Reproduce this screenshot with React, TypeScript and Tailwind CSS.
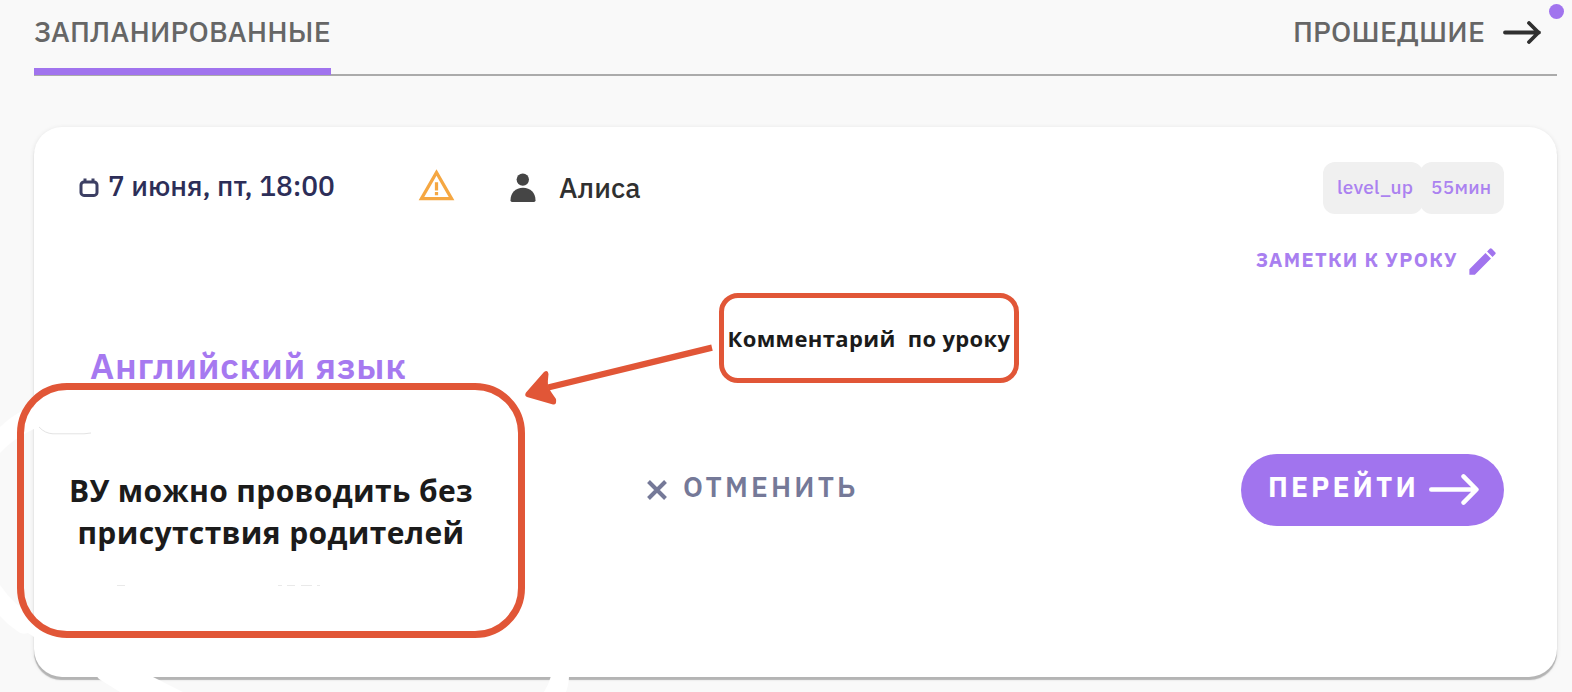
import type { ReactNode } from "react";
import { MdEdit, MdWarningAmber } from "react-icons/md";

const PLEX = "font-['IBM_Plex_Sans','Noto_Sans',sans-serif]";
const NOTE = "font-['Open_Sans',sans-serif] font-bold text-[#1b1b1b]";

function ArrowRight({ className }: { className: string }) {
  return (
    <svg viewBox="0 0 38 23" className={className} fill="none" stroke="currentColor" strokeWidth="3.8" strokeLinecap="round" strokeLinejoin="round">
      <path d="M2 11.5H36M26 2l9.500 9.500L26 21" />
    </svg>
  );
}

function LongArrow({ className }: { className: string }) {
  return (
    <svg viewBox="0 0 50 31" className={className} fill="none" stroke="currentColor" strokeWidth="4.4" strokeLinecap="round" strokeLinejoin="round">
      <path d="M2.200 15.500H47M34.500 2.400L47.500 15.500L34.500 28.600" />
    </svg>
  );
}

function CalendarIcon() {
  return (
    <svg viewBox="0 0 20 19" className="-mt-px h-[19px] w-5" fill="none" stroke="#3c3f63" strokeWidth="3">
      <rect x="2" y="4" width="16" height="13.4" rx="3" />
      <path d="M6 .5V4M14 .5V4" />
    </svg>
  );
}

function PersonIcon() {
  return (
    <svg viewBox="0 0 26 30" className="ml-[54px] h-[30px] w-[26px]" fill="#454545">
      <circle cx="12.8" cy="6.6" r="6.2" />
      <path d="M.5 27.2C.5 20 5.500 14.800 13 14.800S25.500 20 25.500 27.200Q25.500 29 24 29H2Q.5 29 .5 27.200Z" />
    </svg>
  );
}

function Tag({ className, children }: { className: string; children: ReactNode }) {
  return (
    <span className={`flex h-[52px] items-center rounded-xl bg-[#f0f0f0] pb-px text-[19px] font-medium tracking-[0.3px] text-[#ab82f0] ${className}`}>
      {children}
    </span>
  );
}

function Tabs() {
  return (
    <nav className="mr-[15px] ml-[34px] flex h-[76px] items-stretch justify-between border-b-2 border-[#ababab] text-[28.5px] leading-none font-medium tracking-[0.2px] text-[#666]">
      <button className="-mb-px w-[297px] border-b-[7px] border-[#a174ee] pb-[4px] text-left whitespace-nowrap">
        ЗАПЛАНИРОВАННЫЕ
      </button>
      <button className="flex items-center gap-[18px] pr-4 pb-[9px] whitespace-nowrap">
        ПРОШЕДШИЕ
        <ArrowRight className="h-[23px] w-[38px] text-[#303030]" />
      </button>
    </nav>
  );
}

function LessonCard() {
  return (
    <section className="mt-[51px] mr-[15px] ml-[34px] h-[550px] rounded-[28px] bg-white pt-[35px] pr-[53px] pl-[45px] shadow-[0_3px_1px_-0.5px_#b4b4b4,0_1px_5px_rgba(0,0,0,0.1)]">
      <div className="flex h-[52px] items-center">
        <CalendarIcon />
        <span className="ml-[9px] w-[309px] pb-[4px] text-[28px] leading-none font-medium tracking-[-0.05px] text-[#2d2e58]">
          7 июня, пт, 18:00
        </span>
        <MdWarningAmber className="-mt-[5px] size-[39px] text-[#f5a742]" />
        <PersonIcon />
        <span className="ml-[23px] text-[28px] leading-none font-medium text-[#303030]">Алиса</span>
        <div className="ml-auto flex">
          <Tag className="w-[100px] pl-[14px]">level_up</Tag>
          <Tag className="-ml-[3px] w-[84px] pl-[11px]">55мин</Tag>
        </div>
      </div>
      <button className="mt-[29px] ml-auto flex h-[36px] items-center gap-[7px] pr-[4px] text-[20px] leading-none font-bold tracking-[1.3px] text-[#a97ff0]">
        <span className="pb-[3px]">ЗАМЕТКИ К УРОКУ</span>
        <MdEdit className="size-[35px] text-[#a174ee]" />
      </button>
      <h2 className="mt-[62px] ml-[11px] text-[36px] leading-[50px] font-semibold tracking-[0.75px] text-[#a679f0]">
        Английский язык
      </h2>
      <div className="mt-[63px] flex h-[72px] items-start">
        <p className={`mt-4 ml-[-18px] w-[420px] text-center text-[30px] leading-[42px] tracking-[0.37px] ${NOTE}`}>
          ВУ можно проводить без присутствия родителей
        </p>
        <button className="ml-[166px] flex h-[72px] items-center gap-4 text-[28px] leading-none font-semibold tracking-[3.2px] text-[#757998]">
          <svg viewBox="0 0 20 20" className="size-5" stroke="currentColor" strokeWidth="4">
            <path d="M1.500 1.500l17 17M18.500 1.500l-17 17" />
          </svg>
          <span className="pb-[6px]">ОТМЕНИТЬ</span>
        </button>
        <button className="ml-auto flex h-[72px] w-[263px] items-center gap-[10px] rounded-full bg-[#a174ee] pb-[2px] pl-[27px] text-[28px] leading-none font-bold tracking-[3.1px] text-white">
          <span className="pb-[5px]">ПЕРЕЙТИ</span>
          <LongArrow className="h-[31px] w-[50px]" />
        </button>
      </div>
    </section>
  );
}

// white marker swipes and the faint leftovers of what they cover
function EraserMarks() {
  return (
    <svg viewBox="0 0 1572 692" className="pointer-events-none absolute inset-0 h-[692px] w-[1572px]" fill="#fff">
      <path d="M0 427Q10 417 22 411L40 405V429H34Q14 438 0 453Z" />
      <path d="M0 585Q14 606 40 620V637H34L28 633Q22 635 17 631Q8 625 0 616Z" />
      <path d="M95 674L99 679L120 692H183L153 677Z" />
      <path d="M551 676H569Q569 683 566 692H544Q549 684 551 676Z" />
      <path d="M39 427Q45 433.500 53 433.800H84L91 433" fill="none" stroke="#e3e3e3" />
      <path d="M117 585.500h8M278 585.500h4M287 585.500h8M301 585.500h11M317 585.500h3" stroke="#e9e9e9" />
    </svg>
  );
}

function CalloutArrow() {
  return (
    <svg viewBox="0 0 190 62" className="absolute top-[344px] left-[524px] h-[62px] w-[190px]" fill="#e15637">
      <path d="M188 3.700L24 43.500" stroke="#e15637" strokeWidth="6.4" />
      <path d="M2 48.500L20 28Q24 25.500 24.500 30Q23.500 37 24 43Q27 48 32 55Q33 61 29 60.500L3 53Q0 51.500 2 48.500Z" />
    </svg>
  );
}

export default function App() {
  return (
    <main className={`relative h-[692px] w-[1572px] overflow-hidden bg-[#f9f9f9] ${PLEX}`}>
      <Tabs />
      <span className="absolute top-[4px] left-[1549px] size-[15px] rounded-full bg-[#a174ee]" />
      <LessonCard />
      <EraserMarks />
      <div className="absolute top-[383px] left-[17px] h-[255px] w-[508px] rounded-[50px] border-[7px] border-[#e15637]" />
      <CalloutArrow />
      <div className={`absolute top-[293px] left-[719px] flex h-[90px] w-[300px] items-center justify-center rounded-[19px] border-[5px] border-[#e15637] text-[22px] tracking-[0.35px] whitespace-pre ${NOTE}`}>
        Комментарий  по уроку
      </div>
    </main>
  );
}
